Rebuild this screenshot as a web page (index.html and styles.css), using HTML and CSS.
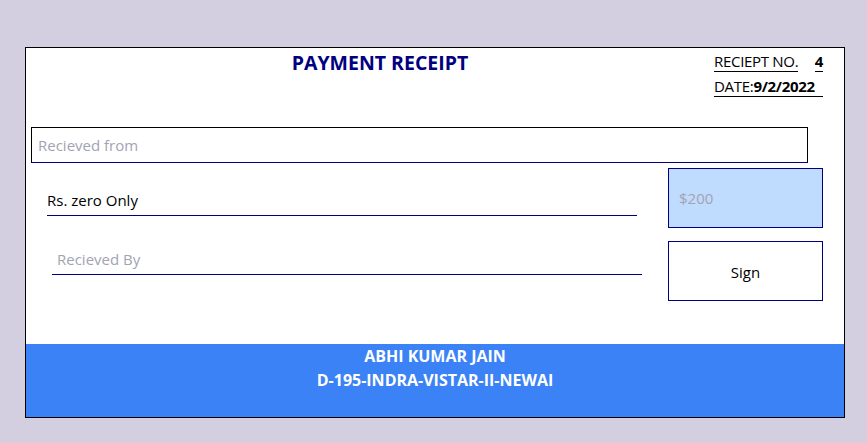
FILE: index.html
```html
<!DOCTYPE html>
<html>
<head>
<meta charset="utf-8">
<link rel="stylesheet" href="styles.css">
</head>
<body>
<div class="card">
  <header class="head">
    <h1 class="title">PAYMENT RECEIPT</h1>
    <div class="meta">
      <div class="meta-row">
        <span class="under">RECIEPT NO.</span>
        <span class="under bold">4</span>
      </div>
      <div class="meta-row under">DATE:<span class="bold">9/2/2022</span></div>
    </div>
  </header>
  <div class="from"><span class="ph">Recieved from</span></div>
  <div class="body">
    <div class="left">
      <div class="line words">Rs. zero Only</div>
      <div class="line by"><span class="ph">Recieved By</span></div>
    </div>
    <div class="right">
      <div class="amount"><span class="ph">$200</span></div>
      <div class="sign">Sign</div>
    </div>
  </div>
  <footer class="foot">
    <div>ABHI KUMAR JAIN</div>
    <div>D-195-INDRA-VISTAR-II-NEWAI</div>
  </footer>
</div>
</body>
</html>
```

FILE: styles.css
```css
* { box-sizing: border-box; }
html, body { margin: 0; padding: 0; }
body {
  background: #d3cfe0;
  font-family: "Open Sans", "Noto Sans", sans-serif;
  color: #000;
  width: 867px;
  height: 443px;
  overflow: hidden;
}
.card {
  margin: 47px 0 0 25px;
  width: 820px;
  height: 371px;
  border: 1px solid #000;
  background: #fff;
  display: flex;
  flex-direction: column;
}
.head {
  display: flex;
  height: 79px;
}
.title {
  flex: 1;
  margin: 0;
  padding-top: 3px;
  text-align: center;
  font-size: 19.5px;
  font-weight: 700;
  line-height: 24px;
  color: #000080;
  padding-left: 20px;
}
.meta {
  width: 109px;
  margin-right: 21px;
  padding-top: 3px;
  font-size: 15px;
  letter-spacing: -0.3px;
}
.meta-row {
  display: flex;
  justify-content: space-between;
  height: 21px;
  line-height: 20px;
  margin-bottom: 4px;
}
.under { border-bottom: 1px solid #000; display: inline-block; }
.meta-row.under { display: block; }
.meta-row .under { height: 21px; }
.bold { font-weight: 700; }
.ph { color: #a3a3b3; }
.from {
  margin-left: 5px;
  width: 777px;
  height: 36px;
  border: 1px solid #000;
  border-bottom-color: #000080;
  padding-left: 6px;
  font-size: 15px;
  line-height: 34px;
}
.body {
  display: flex;
  margin-top: 5px;
}
.left { flex: 1; }
.line {
  width: 590px;
  height: 48px;
  border-bottom: 1px solid #000080;
  display: flex;
  align-items: flex-end;
  padding-bottom: 5px;
  font-size: 15px;
}
.words { margin-left: 21px; }
.by { margin-left: 26px; margin-top: 11px; padding-left: 5px; }
.right {
  width: 155px;
  margin-right: 21px;
}
.amount, .sign {
  height: 60px;
  border: 1px solid #000080;
  font-size: 15px;
  display: flex;
  align-items: center;
}
.amount {
  background: #bfdbfe;
  padding-left: 10px;
}
.sign {
  margin-top: 13px;
  justify-content: center;
  padding-top: 2px;
}
.foot {
  margin-top: auto;
  height: 73px;
  background: #3b82f6;
  color: #fff;
  font-weight: 700;
  font-size: 16px;
  line-height: 24px;
  text-align: center;
  padding-top: 0;
}
```
